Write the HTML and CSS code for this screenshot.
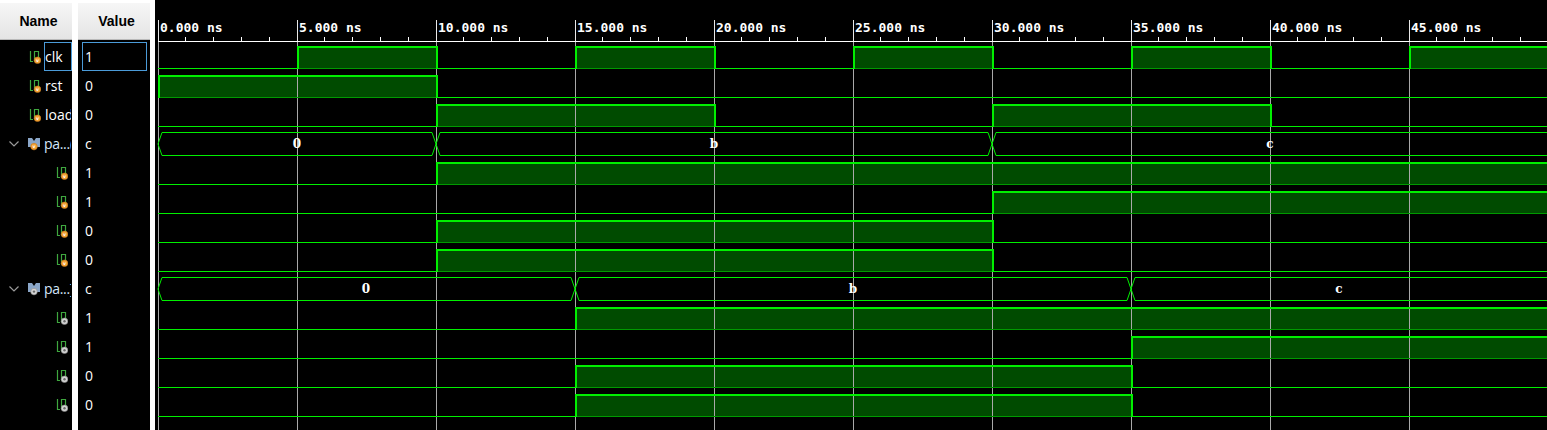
FILE: index.html
```html
<!DOCTYPE html>
<html>
<head>
<meta charset="utf-8">
<link rel="stylesheet" href="styles.css">
</head>
<body>
<div class="app">
  <div class="left">
    <div class="col names">
      <div class="hdr">Name</div>
      <div class="rows">
        <div class="row sig"><svg class="ic" viewBox="0 0 12 14"><use href="#sig-in"/></svg><span class="nm sel">clk</span></div>
        <div class="row sig"><svg class="ic" viewBox="0 0 12 14"><use href="#sig-in"/></svg><span class="nm">rst</span></div>
        <div class="row sig"><svg class="ic" viewBox="0 0 12 14"><use href="#sig-in"/></svg><span class="nm">load</span></div>
        <div class="row bus"><svg class="chev" viewBox="0 0 10 6"><polyline points="0.5,0.5 5,5 9.5,0.5"/></svg><svg class="ic" viewBox="0 0 12 14"><use href="#bus-in"/></svg><span class="nm busnm">pa...(</span></div>
        <div class="row sub"><svg class="ic" viewBox="0 0 12 14"><use href="#sig-in"/></svg></div>
        <div class="row sub"><svg class="ic" viewBox="0 0 12 14"><use href="#sig-in"/></svg></div>
        <div class="row sub"><svg class="ic" viewBox="0 0 12 14"><use href="#sig-in"/></svg></div>
        <div class="row sub"><svg class="ic" viewBox="0 0 12 14"><use href="#sig-in"/></svg></div>
        <div class="row bus"><svg class="chev" viewBox="0 0 10 6"><polyline points="0.5,0.5 5,5 9.5,0.5"/></svg><svg class="ic" viewBox="0 0 12 14"><use href="#bus-int"/></svg><span class="nm busnm">pa...]</span></div>
        <div class="row sub"><svg class="ic" viewBox="0 0 12 14"><use href="#sig-int"/></svg></div>
        <div class="row sub"><svg class="ic" viewBox="0 0 12 14"><use href="#sig-int"/></svg></div>
        <div class="row sub"><svg class="ic" viewBox="0 0 12 14"><use href="#sig-int"/></svg></div>
        <div class="row sub"><svg class="ic" viewBox="0 0 12 14"><use href="#sig-int"/></svg></div>
      </div>
    </div>
    <div class="col values">
      <div class="hdr">Value</div>
      <div class="rows">
        <div class="row"><span class="val sel">1</span></div>
        <div class="row"><span class="val">0</span></div>
        <div class="row"><span class="val">0</span></div>
        <div class="row"><span class="val">c</span></div>
        <div class="row"><span class="val">1</span></div>
        <div class="row"><span class="val">1</span></div>
        <div class="row"><span class="val">0</span></div>
        <div class="row"><span class="val">0</span></div>
        <div class="row"><span class="val">c</span></div>
        <div class="row"><span class="val">1</span></div>
        <div class="row"><span class="val">1</span></div>
        <div class="row"><span class="val">0</span></div>
        <div class="row"><span class="val">0</span></div>
      </div>
    </div>
  </div>
  <div class="wave">
    <svg class="wsvg" width="1392" height="430" viewBox="155 0 1392 430">
      <defs>
        <g id="sig-in">
          <path class="icw" d="M1.5 1V11.5H4M5.5 11.5V1.5H9.5V8"/>
          <circle class="cin" cx="8.5" cy="10.3" r="3.3"/>
          <text class="cv" x="8.5" y="11.8">v</text>
        </g>
        <g id="sig-int">
          <path class="icw" d="M1.5 1V11.5H4M5.5 11.5V1.5H9.5V8"/>
          <circle class="cgr" cx="8.5" cy="10.3" r="3.3"/>
          <circle class="cdot" cx="8.5" cy="10.3" r="1.2"/>
        </g>
        <g id="bus-in">
          <polygon class="busic" points="0,1 4,1 6,4 8,1 12,1 12,10 0,10"/>
          <circle class="cin" cx="6" cy="9.6" r="3.3"/>
          <text class="cv" x="6" y="11.1">v</text>
        </g>
        <g id="bus-int">
          <polygon class="busic" points="0,1 4,1 6,4 8,1 12,1 12,10 0,10"/>
          <circle class="cgr" cx="6" cy="9.6" r="3.3"/>
          <circle class="cdot" cx="6" cy="9.6" r="1.2"/>
        </g>
      </defs>

      <g class="fill">
        <rect x="297" y="46" width="139" height="22"/>
        <rect x="575" y="46" width="139" height="22"/>
        <rect x="853" y="46" width="139" height="22"/>
        <rect x="1131" y="46" width="139" height="22"/>
        <rect x="1409" y="46" width="160" height="22"/>
        <rect x="158" y="75" width="278" height="22"/>
        <rect x="436" y="104" width="278" height="22"/>
        <rect x="992" y="104" width="278" height="22"/>
        <rect x="436" y="162" width="1130" height="22"/>
        <rect x="992" y="191" width="600" height="22"/>
        <rect x="436" y="220" width="556" height="22"/>
        <rect x="436" y="249" width="556" height="22"/>
        <rect x="575" y="307" width="1000" height="22"/>
        <rect x="1131" y="336" width="500" height="22"/>
        <rect x="575" y="365" width="556" height="22"/>
        <rect x="575" y="394" width="556" height="22"/>
      </g>

      <path class="grid" d="M158.5 41V430M297.5 41V430M436.5 41V430M575.5 41V430M714.5 41V430M853.5 41V430M992.5 41V430M1131.5 41V430M1270.5 41V430M1409.5 41V430"/>

      <path class="axis" d="M158 41.5H1547"/>
      <path class="major" d="M158.5 20V41M297.5 20V41M436.5 20V41M575.5 20V41M714.5 20V41M853.5 20V41M992.5 20V41M1131.5 20V41M1270.5 20V41M1409.5 20V41"/>
      <path class="minor" d="M185.5 37V41M213.5 37V41M241.5 37V41M269.5 37V41M324.5 37V41M352.5 37V41M380.5 37V41M408.5 37V41M463.5 37V41M491.5 37V41M519.5 37V41M547.5 37V41M602.5 37V41M630.5 37V41M658.5 37V41M686.5 37V41M741.5 37V41M769.5 37V41M797.5 37V41M825.5 37V41M880.5 37V41M908.5 37V41M936.5 37V41M964.5 37V41M1019.5 37V41M1047.5 37V41M1075.5 37V41M1103.5 37V41M1158.5 37V41M1186.5 37V41M1214.5 37V41M1242.5 37V41M1297.5 37V41M1325.5 37V41M1353.5 37V41M1381.5 37V41M1436.5 37V41M1464.5 37V41M1492.5 37V41M1520.5 37V41"/>
      <g class="tlab">
        <text x="160" y="32">0.000 ns</text>
        <text x="299" y="32">5.000 ns</text>
        <text x="438" y="32">10.000 ns</text>
        <text x="577" y="32">15.000 ns</text>
        <text x="716" y="32">20.000 ns</text>
        <text x="855" y="32">25.000 ns</text>
        <text x="994" y="32">30.000 ns</text>
        <text x="1133" y="32">35.000 ns</text>
        <text x="1272" y="32">40.000 ns</text>
        <text x="1411" y="32">45.000 ns</text>
      </g>

      <path class="base" d="M297 68.5H436M575 68.5H714M853 68.5H992M1131 68.5H1270M1409 68.5H1560
        M158 97.5H436
        M436 126.5H714M992 126.5H1270
        M436 184.5H1560
        M992 213.5H1560
        M436 242.5H992
        M436 271.5H992
        M575 329.5H1560
        M1131 358.5H1560
        M575 387.5H1131
        M575 416.5H1131"/>

      <path class="lo" d="M158 68.5H297M436 68.5H575M714 68.5H853M992 68.5H1131M1270 68.5H1409
        M436 97.5H1560
        M158 126.5H436M714 126.5H992M1270 126.5H1560
        M158 184.5H436
        M158 213.5H992
        M158 242.5H436M992 242.5H1560
        M158 271.5H436M992 271.5H1560
        M158 329.5H575
        M158 358.5H1131
        M158 387.5H575M1131 387.5H1560
        M158 416.5H575M1131 416.5H1560"/>

      <path class="hi" d="M298 69V47H437V69M576 69V47H715V69M854 69V47H993V69M1132 69V47H1271V69M1410 69V47H1560
        M159 98V76H437V98
        M437 127V105H715V127M993 127V105H1271V127
        M437 185V163H1560
        M993 214V192H1560
        M437 243V221H993V243
        M437 272V250H993V272
        M576 330V308H1560
        M1132 359V337H1560
        M576 388V366H1132V388
        M576 417V395H1132V417"/>

      <path class="busl" d="M162 132.5H432L440 155.5H988L996 132.5H1560M162 155.5H432L440 132.5H988L996 155.5H1560M162 132.5L158 144L162 155.5"/>
      <path class="busl" d="M162 277.5H571L579 300.5H1127L1135 277.5H1560M162 300.5H571L579 277.5H1127L1135 300.5H1560M162 277.5L158 289L162 300.5"/>
      <g class="bval">
        <text x="297" y="148">0</text>
        <text x="714" y="148">b</text>
        <text x="1270" y="148">c</text>
        <text x="366" y="293">0</text>
        <text x="853" y="293">b</text>
        <text x="1339" y="293">c</text>
      </g>
    </svg>
  </div>
</div>
</body>
</html>
```

FILE: styles.css
```css
html, body {
  margin: 0;
  padding: 0;
  background: #000;
}

.app {
  display: flex;
  width: 1547px;
  height: 430px;
  overflow: hidden;
  background: #000;
  font-family: "Open Sans", "Noto Sans", sans-serif;
}

.left {
  display: flex;
  gap: 6px;
  background: #fff;
  padding-right: 5px;
  height: 430px;
}

.col {
  margin-top: 3px;
  background: #000;
  display: flex;
  flex-direction: column;
  overflow: hidden;
}

.names { width: 72px; }
.values { width: 72px; }

.hdr {
  height: 36px;
  border-bottom: 1px solid #b9b9b9;
  background: linear-gradient(#f6f6f6, #e4e4e4);
  font: bold 14px "Liberation Sans", Arial, sans-serif;
  color: #000;
  display: flex;
  align-items: center;
  justify-content: center;
  padding-left: 5px;
}

.rows {
  padding-top: 2px;
  display: flex;
  flex-direction: column;
}

.row {
  height: 29px;
  display: flex;
  align-items: center;
  color: #fff;
  font-size: 14px;
  white-space: nowrap;
  overflow: hidden;
}

.sig { padding-left: 29px; }
.bus { padding-left: 9px; }
.sub { padding-left: 56px; }

.ic {
  width: 12px;
  height: 14px;
  flex: none;
  margin-right: 3px;
}

.chev {
  width: 10px;
  height: 6px;
  flex: none;
  margin-right: 9px;
  fill: none;
  stroke: #9a9a9a;
  stroke-width: 1.2;
}

.nm {
  align-self: stretch;
  display: flex;
  align-items: center;
  flex: 1 1 auto;
  min-width: 0;
  overflow: hidden;
  border: 1px solid transparent;
  padding-left: 0;
}

.busnm {
  color: #d4e6fa;
  letter-spacing: -0.3px;
}

.sel { border-color: #4b9bd9; }

.val {
  align-self: stretch;
  display: flex;
  align-items: center;
  margin-left: 4px;
  width: 65px;
  box-sizing: border-box;
  border: 1px solid transparent;
  padding-left: 2px;
}
.val.sel { border-color: #4b9bd9; }

.wave {
  flex: 1;
  background: #000;
}

.wsvg { display: block; }

.icw { fill: none; stroke: #3fa73f; stroke-width: 1.2; }
.cin { fill: #f2a235; stroke: #c9781a; stroke-width: 0.6; }
.cgr { fill: #d4d4d4; stroke: #8a8a8a; stroke-width: 0.6; }
.cdot { fill: #6a6a6a; }
.cv { fill: #fff; font: bold 4.5px "DejaVu Sans", sans-serif; text-anchor: middle; }
.busic { fill: #8aa6c8; }

.fill rect { fill: #004b00; }
.grid { stroke: #a9a9a9; stroke-width: 1; fill: none; }
.axis { stroke: #fff; stroke-width: 1; fill: none; }
.major { stroke: #e8e8e8; stroke-width: 1; fill: none; }
.minor { stroke: #fff; stroke-width: 1; fill: none; }
.tlab text {
  fill: #fff;
  font: bold 13px "DejaVu Sans Mono", "Liberation Mono", monospace;
}
.base { stroke: #009a00; stroke-width: 1; fill: none; }
.lo { stroke: #00f000; stroke-width: 1; fill: none; }
.hi { stroke: #00f000; stroke-width: 2; fill: none; }
.busl { stroke: #00f000; stroke-width: 1; fill: none; }
.bval text {
  fill: #fff;
  font: bold 12px "DejaVu Serif", "Liberation Serif", serif;
  text-anchor: middle;
}
```
